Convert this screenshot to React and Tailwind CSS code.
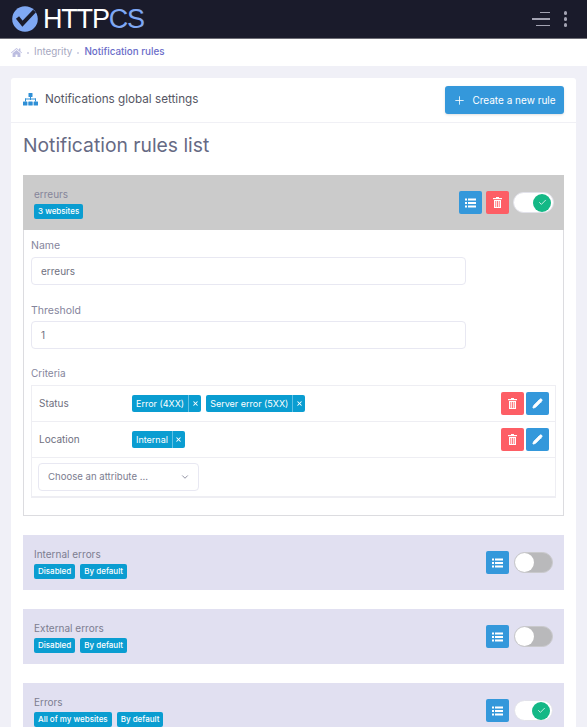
import { Plus, Check, Pencil, ChevronDown, X } from 'lucide-react';

const font = { fontFamily: 'Inter, "Noto Sans", sans-serif' };

function HomeIcon() {
  return (
    <svg width="11" height="9" viewBox="0 0 11 9" fill="#bcbde0">
      <path d="M5.5 0L8 2.1V.6h1.4v2.7L11 4.6l-.5.6-5-4.1-5 4.1-.5-.6z" />
      <path d="M5.5 2.1L9.4 5.3V9H6.5V6.4h-2V9H1.6V5.3z" />
    </svg>
  );
}

function ListIcon() {
  return (
    <svg width="11" height="10" viewBox="0 0 11 10" fill="currentColor">
      <rect x="0" y="0.5" width="2" height="2" />
      <rect x="0" y="4" width="2" height="2" />
      <rect x="0" y="7.5" width="2" height="2" />
      <rect x="3" y="0.5" width="8" height="2" />
      <rect x="3" y="4" width="8" height="2" />
      <rect x="3" y="7.5" width="8" height="2" />
    </svg>
  );
}

function TrashIcon() {
  return (
    <svg width="9" height="11" viewBox="0 0 9 11" fill="currentColor">
      <rect x="3" y="0" width="3" height="1" />
      <rect x="0" y="1" width="9" height="1.2" />
      <path d="M1 3h7v8H1z M2.4 4v6h.8V4z M4.1 4v6h.8V4z M5.8 4v6h.8V4z" fillRule="evenodd" />
    </svg>
  );
}

function SitemapIcon() {
  return (
    <svg width="15" height="13" viewBox="0 0 15 13" fill="#2f8fd6">
      <rect x="5.5" y="0" width="4" height="4" rx="0.5" />
      <rect x="7" y="4" width="1" height="3" />
      <rect x="2" y="5.5" width="11" height="1" />
      <rect x="2" y="5.5" width="1" height="3" />
      <rect x="12" y="5.5" width="1" height="3" />
      <rect x="0" y="8.5" width="4.4" height="4" rx="0.5" />
      <rect x="5.3" y="8.5" width="4.4" height="4" rx="0.5" />
      <rect x="10.6" y="8.5" width="4.4" height="4" rx="0.5" />
    </svg>
  );
}

function IconButton({ color, children }) {
  return (
    <button className={`flex h-[23px] w-[23px] items-center justify-center rounded-[2px] text-white ${color}`}>
      {children}
    </button>
  );
}

function Toggle({ on, wide }) {
  if (on) {
    return (
      <div className={`flex h-[21px] items-center justify-end rounded-full border border-[#e2e2ea] bg-white pr-[2px] ${wide ? 'w-[41px]' : 'w-[39px]'}`}>
        <div className="flex h-[18px] w-[18px] items-center justify-center rounded-full bg-[#14b886] text-white">
          <Check size={9} strokeWidth={2} />
        </div>
      </div>
    );
  }
  return (
    <div className="flex h-[21px] w-[39px] items-center rounded-full border border-[#c9c9cc] bg-[#b9b9bb]">
      <div className="h-[19px] w-[19px] rounded-full bg-white" />
    </div>
  );
}

function Badge({ children }) {
  return (
    <span className="flex h-[15px] items-center rounded-[2px] bg-[#0a9dd1] px-1 text-[8px] font-medium leading-none text-white">
      {children}
    </span>
  );
}

function Tag({ label }) {
  return (
    <span className="flex h-[17px] items-stretch rounded-[2px] bg-[#0a9dd1] text-[9px] text-white">
      <span className="flex items-center px-1">{label}</span>
      <span className="flex w-[13px] items-center justify-center border-l border-[#5fc0e4]">
        <X size={7} strokeWidth={3.5} />
      </span>
    </span>
  );
}

function Field({ label, value, top, gap }) {
  return (
    <div className={top}>
      <div className="text-[10.5px] leading-4 text-[#85859c]">{label}</div>
      <div className={`flex h-[28px] w-[435px] items-center rounded-[4px] border border-[#e8e8f2] pl-[9px] text-[10px] text-[#6f7080] ${gap}`}>
        {value}
      </div>
    </div>
  );
}

function CriteriaRow({ label, tags }) {
  return (
    <div className="flex h-[36px] items-center border-b border-[#eeeef3] pl-[7px] pr-[6px]">
      <div className="w-[93px] text-[10px] text-[#6f7080]">{label}</div>
      <div className="flex gap-[5px]">
        {tags.map((t) => <Tag key={t} label={t} />)}
      </div>
      <div className="ml-auto flex gap-[2.5px]">
        <IconButton color="bg-[#fd5e65]"><TrashIcon /></IconButton>
        <IconButton color="bg-[#3498db]"><Pencil size={11} fill="currentColor" /></IconButton>
      </div>
    </div>
  );
}

function RuleRow({ name, badges, on }) {
  return (
    <div className="mt-[19px] flex h-[55px] items-center justify-between bg-[#e1e0f1] pl-[11px] pr-[11px]">
      <div>
        <div className="text-[10px] leading-[15px] text-[#7c7d90]">{name}</div>
        <div className="mt-[2px] flex gap-[5px]">
          {badges.map((b) => <Badge key={b}>{b}</Badge>)}
        </div>
      </div>
      <div className="flex items-center gap-[5px]">
        <IconButton color="bg-[#3498db]"><ListIcon /></IconButton>
        <Toggle on={on} />
      </div>
    </div>
  );
}

export default function App() {
  return (
    <div className="h-[727px] overflow-hidden bg-[#f0f0f7]" style={font}>
      <header className="flex h-[39px] items-center justify-between border-b border-[#6d6d75] bg-[#1a1b2b] pl-3 pr-[20px]">
        <div className="flex items-center gap-[5px]">
          <svg width="26" height="26" viewBox="0 0 26 26">
            <circle cx="13" cy="13" r="12.8" fill="#7fa8f4" />
            <path d="M5.5 11.5l5 6.2L22.5 5" fill="none" stroke="#1a1b2b" strokeWidth="4" />
          </svg>
          <span className="text-[27px] leading-none tracking-[-1.2px]" style={{ fontFamily: '"Liberation Sans", sans-serif' }}>
            <span className="text-white">HTTP</span>
            <span className="text-[#7fa8f4]">CS</span>
          </span>
        </div>
        <div className="flex items-center gap-[14px]">
          <div className="flex flex-col items-end gap-[5px]">
            <div className="h-[1.5px] w-[10px] bg-[#a3a3b2]" />
            <div className="h-[1.5px] w-[18px] bg-[#a3a3b2]" />
            <div className="h-[1.5px] w-[14px] bg-[#a3a3b2]" />
          </div>
          <div className="flex flex-col gap-[2.5px]">
            <div className="h-[3.5px] w-[3.5px] rounded-full bg-[#a3a3b2]" />
            <div className="h-[3.5px] w-[3.5px] rounded-full bg-[#a3a3b2]" />
            <div className="h-[3.5px] w-[3.5px] rounded-full bg-[#a3a3b2]" />
          </div>
        </div>
      </header>

      <nav className="flex h-[27px] items-center gap-[5px] bg-white pl-[11px] text-[9.8px]">
        <HomeIcon />
        <span className="h-[2px] w-[2px] rounded-full bg-[#c9cae0]" />
        <span className="text-[#a6a7c0]">Integrity</span>
        <span className="h-[2px] w-[2px] rounded-full bg-[#c9cae0]" />
        <span className="font-medium text-[#6a6cc8]">Notification rules</span>
      </nav>

      <main className="mx-[11px] mt-[12px] rounded-t-[3px] bg-white">
        <div className="flex h-[45px] items-center justify-between border-b border-[#f0f0f5] pl-3 pr-3">
          <div className="flex items-center gap-[7px]">
            <SitemapIcon />
            <span className="text-[11.7px] text-[#555664]">Notifications global settings</span>
          </div>
          <button className="flex h-[28px] w-[119px] items-center justify-center gap-[6px] rounded-[3px] bg-[#3498db] text-[10px] text-white shadow-sm">
            <Plus size={13} strokeWidth={1.5} />
            Create a new rule
          </button>
        </div>

        <div className="px-3">
          <h1 className="mt-[9px] h-[35px] text-[19.3px] font-normal leading-[26px] text-[#666a84]">Notification rules list</h1>
          <section className="mt-[8px] border border-[#dcdce0]">
            <div className="-m-px flex h-[55px] items-center justify-between bg-[#cbcbcb] pl-[11px] pr-[10px]">
              <div>
                <div className="text-[10px] leading-[15px] text-[#85859a]">erreurs</div>
                <div className="mt-[2px] flex"><Badge>3 websites</Badge></div>
              </div>
              <div className="flex items-center gap-1">
                <IconButton color="bg-[#3498db]"><ListIcon /></IconButton>
                <IconButton color="bg-[#fd5e65]"><TrashIcon /></IconButton>
                <Toggle on wide />
              </div>
            </div>
            <div className="px-[7px] pb-[17px] pt-[9px]">
              <Field label="Name" value="erreurs" gap="mt-[3px]" />
              <Field label="Threshold" value="1" top="mt-[18px]" gap="mt-[2px]" />
              <div className="mt-[16px] text-[10px] leading-4 text-[#85859c]">Criteria</div>
              <div className="mt-[4px] border border-b-2 border-[#eeeef3]">
                <CriteriaRow label="Status" tags={['Error (4XX)', 'Server error (5XX)']} />
                <CriteriaRow label="Location" tags={['Internal']} />
                <div className="flex h-[38px] items-center pl-[6px]">
                  <div className="flex h-[28px] w-[161px] items-center justify-between rounded-[4px] border border-[#e8e8f2] pl-[9px] pr-2 text-[9.6px] text-[#7c7d90]">
                    Choose an attribute ...
                    <ChevronDown size={10} />
                  </div>
                </div>
              </div>
            </div>
          </section>

          <RuleRow name="Internal errors" badges={['Disabled', 'By default']} />
          <RuleRow name="External errors" badges={['Disabled', 'By default']} />
          <RuleRow name="Errors" badges={['All of my websites', 'By default']} on />
        </div>
      </main>
    </div>
  );
}
